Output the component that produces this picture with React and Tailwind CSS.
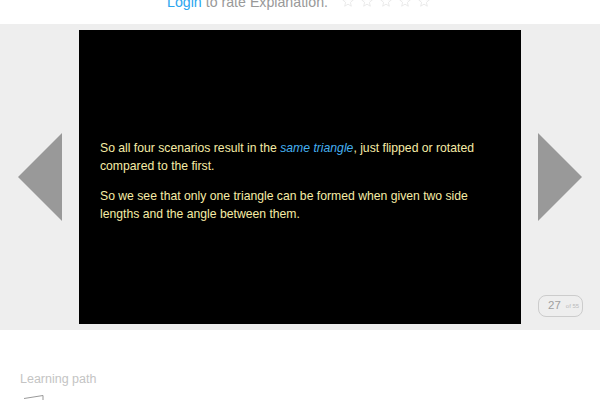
import React from "react";

const Star = () => (
  <svg width="12" height="12" viewBox="0 0 24 24" fill="none" stroke="#e8e8e8" strokeWidth="1.8" className="shrink-0">
    <path d="M12 2l3 7.200 7.600.6-5.800 5 1.800 7.600L12 18.300l-6.600 4.100 1.800-7.600-5.800-5 7.600-.6z" />
  </svg>
);

const Arrow = ({ flip }) => (
  <svg width="44" height="88" viewBox="0 0 44 88" className="shrink-0">
    <polygon points={flip ? "0,0 44,44 0,88" : "44,0 0,44 44,88"} fill="#999999" />
  </svg>
);

const App = () => {
  return (
    <div className="w-[600px] h-[400px] overflow-hidden bg-white font-['Liberation_Sans',Arial,sans-serif]">
      {/* rating row, cut off by the top of the window */}
      <div className="h-6 overflow-hidden pl-[167px]">
        <div className="flex items-center -mt-[6px] h-[18px] text-[14.2px] text-[#999999]">
          <span className="text-[#2ba6ef]">Login</span>
          <span className="ml-1">to rate Explanation.</span>
          <div className="flex gap-[7px] ml-[14px] -mt-[5px]">
            <Star />
            <Star />
            <Star />
            <Star />
            <Star />
          </div>
        </div>
      </div>

      <div className="relative h-[306px] bg-[#eeeeee] flex items-center justify-between px-[18px]">
        <Arrow />
        <div className="w-[442px] h-[294px] bg-black flex flex-col justify-center pt-2 px-[21px] text-[12.2px] leading-[18px] text-[#f6eca6]">
          <p className="mb-3">
            So all four scenarios result in the{" "}
            <em className="text-[#45b0f0]">same triangle</em>, just flipped or rotated compared to the first.
          </p>
          <p>So we see that only one triangle can be formed when given two side lengths and the angle between them.</p>
        </div>
        <Arrow flip />
        <div className="absolute left-[538px] top-[271px] w-[45px] h-[22px] border border-[#cccccc] rounded-lg flex items-center pl-[9px] gap-[5px] text-[#a0a0a0]">
          <span className="text-[11.5px]">27</span>
          <span className="text-[6px] text-[#bbbbbb]">of 55</span>
        </div>
      </div>

      <div className="pl-5 pt-[42px]">
        <div className="text-[12.5px] leading-[14px] text-[#c4c4c4]">Learning path</div>
        <svg width="26" height="14" viewBox="0 0 26 14" className="mt-[9px] block">
          <path d="M4 3.500L23 .5V14" fill="none" stroke="#999999" strokeWidth="1" />
        </svg>
      </div>
    </div>
  );
};

export default App;
